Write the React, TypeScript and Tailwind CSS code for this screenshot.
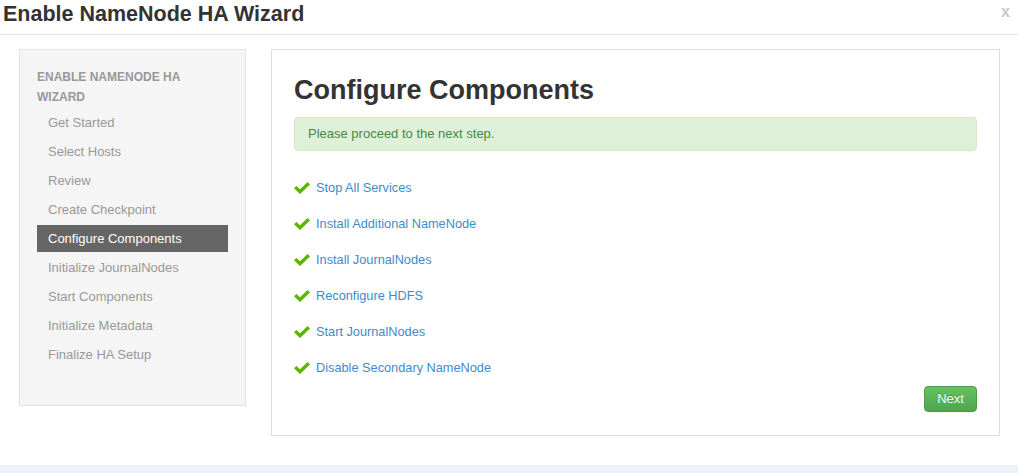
import React from 'react';

const steps = [
  'Get Started',
  'Select Hosts',
  'Review',
  'Create Checkpoint',
  'Configure Components',
  'Initialize JournalNodes',
  'Start Components',
  'Initialize Metadata',
  'Finalize HA Setup',
];

const tasks = [
  'Stop All Services',
  'Install Additional NameNode',
  'Install JournalNodes',
  'Reconfigure HDFS',
  'Start JournalNodes',
  'Disable Secondary NameNode',
];

function CheckIcon() {
  return (
    <svg width="16" height="12" viewBox="0 0 16 12" className="shrink-0">
      <polygon points="0,6.3 2.4,3.9 6,7.3 13.6,0 16,2.4 6,12" fill="#5ab400" />
    </svg>
  );
}

export default function App() {
  const active = 'Configure Components';

  return (
    <div className="flex h-[473px] w-[1018px] flex-col bg-white font-['Liberation_Sans',Arial,sans-serif] text-[#333]">
      {/* modal header */}
      <div className="flex h-[35px] shrink-0 items-start justify-between border-b border-[#e5e5e5] px-[3px]">
        <h1 className="pt-[1px] text-[21.5px] font-bold leading-[26px] text-[#333]">Enable NameNode HA Wizard</h1>
        <span className="pr-[5px] pt-[3px] text-[16px] font-bold leading-[18px] text-[#c8c8c8]">x</span>
      </div>

      {/* body */}
      <div className="flex gap-[25px] pb-[29px] pl-[19px] pt-[14px]">
        {/* sidebar */}
        <div className="h-[357px] w-[227px] shrink-0 border border-[#e3e3e3] bg-[#f5f5f5] px-[17px] pt-[17px]">
          <div className="mb-[2px] text-[12px] font-bold uppercase leading-[20px] text-[#999]">
            Enable NameNode HA Wizard
          </div>
          <ul>
            {steps.map((s) => (
              <li
                key={s}
                className={
                  s === active
                    ? 'mb-[2px] h-[27px] bg-[#666] px-[11px] text-[13px] leading-[27px] text-white'
                    : 'mb-[2px] h-[27px] px-[11px] text-[13px] leading-[27px] text-[#999]'
                }
              >
                {s}
              </li>
            ))}
          </ul>
        </div>

        {/* main panel */}
        <div className="h-[387px] w-[729px] shrink-0 border border-[#ddd] bg-white px-[22px] pt-[25px]">
          <h2 className="mb-[12px] text-[27px] font-bold leading-[30px] text-[#333]">Configure Components</h2>
          <div className="rounded-[4px] border border-[#d6e9c6] bg-[#dff0d8] px-[13px] py-[7px] text-[13px] leading-[18px] text-[#468847]">
            Please proceed to the next step.
          </div>
          <div className="mt-[19px]">
            {tasks.map((t) => (
              <div key={t} className="flex h-[36px] items-center gap-[6px]">
                <CheckIcon />
                <a className="cursor-pointer text-[12.75px] text-[#428bca]">{t}</a>
              </div>
            ))}
          </div>
          <div className="flex justify-end">
            <button className="h-[26px] w-[53px] rounded-[4px] border border-[#4a9a4a] bg-linear-to-b from-[#62c462] to-[#4ea54e] text-[13px] text-white [text-shadow:0_-1px_0_rgba(0,0,0,0.25)]">
              Next
            </button>
          </div>
        </div>
      </div>

      <div className="h-[8px] shrink-0 bg-[#edf2f9]" />
    </div>
  );
}
